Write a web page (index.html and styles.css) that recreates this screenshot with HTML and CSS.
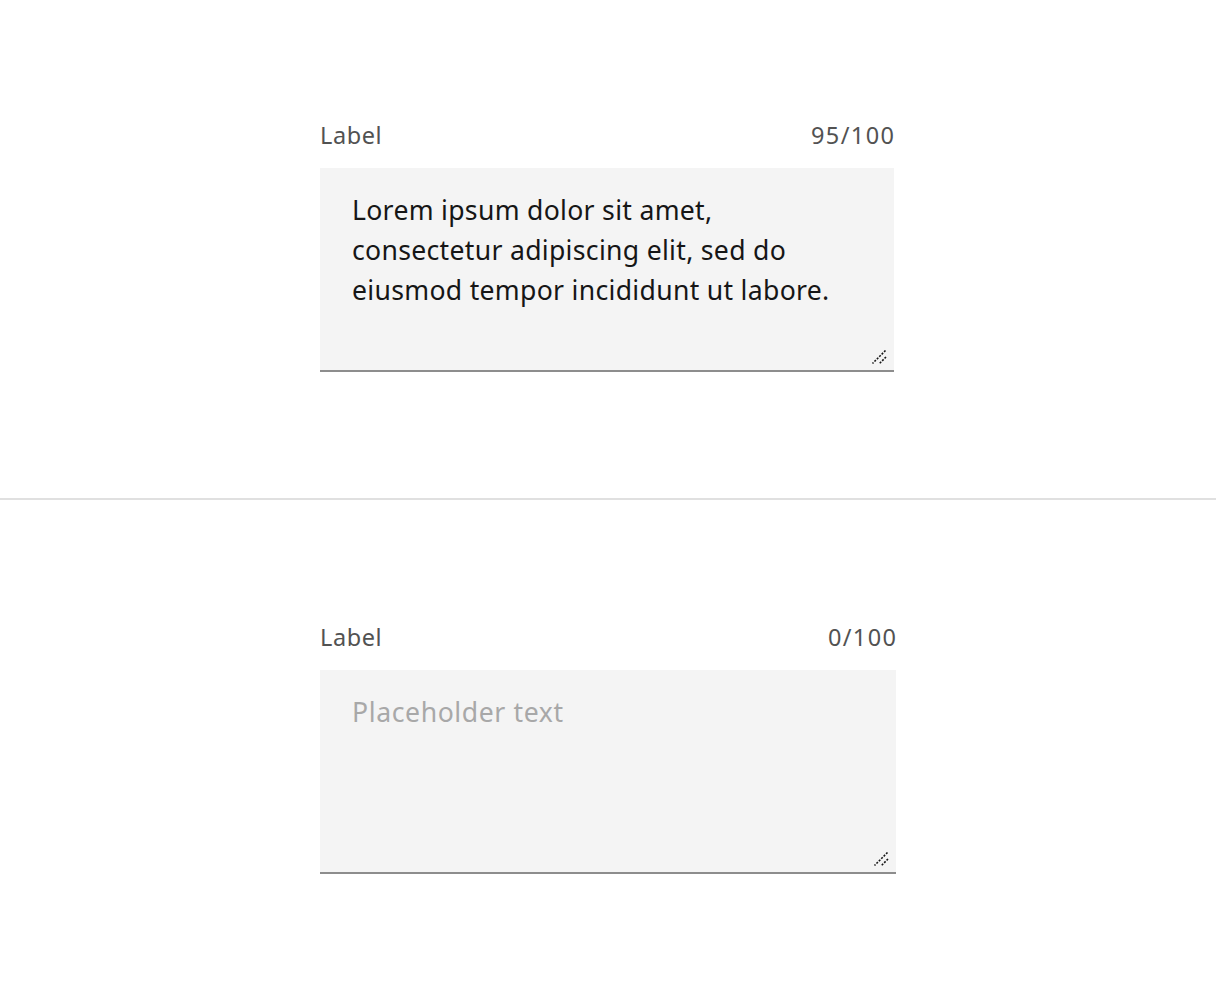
FILE: index.html
```html
<!DOCTYPE html>
<html lang="en">
<head>
<meta charset="utf-8">
<title>Text area</title>
<link rel="stylesheet" href="styles.css">
</head>
<body>
<section class="panel">
  <div class="field">
    <div class="field-head">
      <label class="label" for="ta1">Label</label>
      <span class="counter">95/100</span>
    </div>
    <div class="textarea-wrap">
      <textarea id="ta1" class="textarea">Lorem ipsum dolor sit amet, consectetur adipiscing elit, sed do eiusmod tempor incididunt ut labore.</textarea>
      <svg class="grip" width="16" height="16" viewBox="0 0 16 16" aria-hidden="true">
        <line x1="14.5" y1="1.5" x2="1.5" y2="14.5" stroke="#161616" stroke-width="1.6" stroke-dasharray="2 1.4"/>
        <line x1="15" y1="8" x2="8.5" y2="14.5" stroke="#161616" stroke-width="1.6" stroke-dasharray="2 1.4"/>
      </svg>
    </div>
  </div>
</section>
<hr class="divider">
<section class="panel panel-bottom">
  <div class="field field-wide">
    <div class="field-head">
      <label class="label" for="ta2">Label</label>
      <span class="counter">0/100</span>
    </div>
    <div class="textarea-wrap">
      <textarea id="ta2" class="textarea" placeholder="Placeholder text"></textarea>
      <svg class="grip" width="16" height="16" viewBox="0 0 16 16" aria-hidden="true">
        <line x1="14.5" y1="1.5" x2="1.5" y2="14.5" stroke="#161616" stroke-width="1.6" stroke-dasharray="2 1.4"/>
        <line x1="15" y1="8" x2="8.5" y2="14.5" stroke="#161616" stroke-width="1.6" stroke-dasharray="2 1.4"/>
      </svg>
    </div>
  </div>
</section>
</body>
</html>
```

FILE: styles.css
```css
html, body {
  margin: 0;
  padding: 0;
  background: #ffffff;
}
body {
  font-family: "Noto Sans", "Open Sans", sans-serif;
  color: #161616;
}
.panel {
  height: 498px;
  box-sizing: border-box;
  padding-top: 120px;
  padding-left: 320px;
}
.panel-bottom {
  height: 502px;
  padding-top: 122px;
}
.divider {
  margin: 0;
  border: 0;
  height: 2px;
  background: #e0e0e0;
}
.field {
  width: 574px;
}
.field-wide {
  width: 576px;
}
.field-head {
  display: flex;
  justify-content: space-between;
  align-items: center;
  height: 32px;
  margin-bottom: 16px;
  font-size: 23.5px;
  line-height: 32px;
  letter-spacing: 0.6px;
  color: #525252;
}
.label {
  position: relative;
  top: -1px;
}
.counter {
  position: relative;
  top: -1px;
  letter-spacing: 1.4px;
  margin-right: -1.4px;
}
.textarea-wrap {
  position: relative;
}
.textarea {
  display: block;
  width: 100%;
  height: 204px;
  box-sizing: border-box;
  margin: 0;
  padding: 22px 60px 22px 32px;
  border: 0;
  border-bottom: 2px solid #8d8d8d;
  border-radius: 0;
  background: #f4f4f4;
  font-family: inherit;
  font-size: 26.6px;
  line-height: 40px;
  letter-spacing: 0.3px;
  color: #161616;
  resize: none;
  outline: none;
}
.textarea::placeholder {
  color: #a8a8a8;
  opacity: 1;
  letter-spacing: 0.6px;
}
.grip {
  position: absolute;
  right: 7px;
  bottom: 7px;
  pointer-events: none;
}
```
